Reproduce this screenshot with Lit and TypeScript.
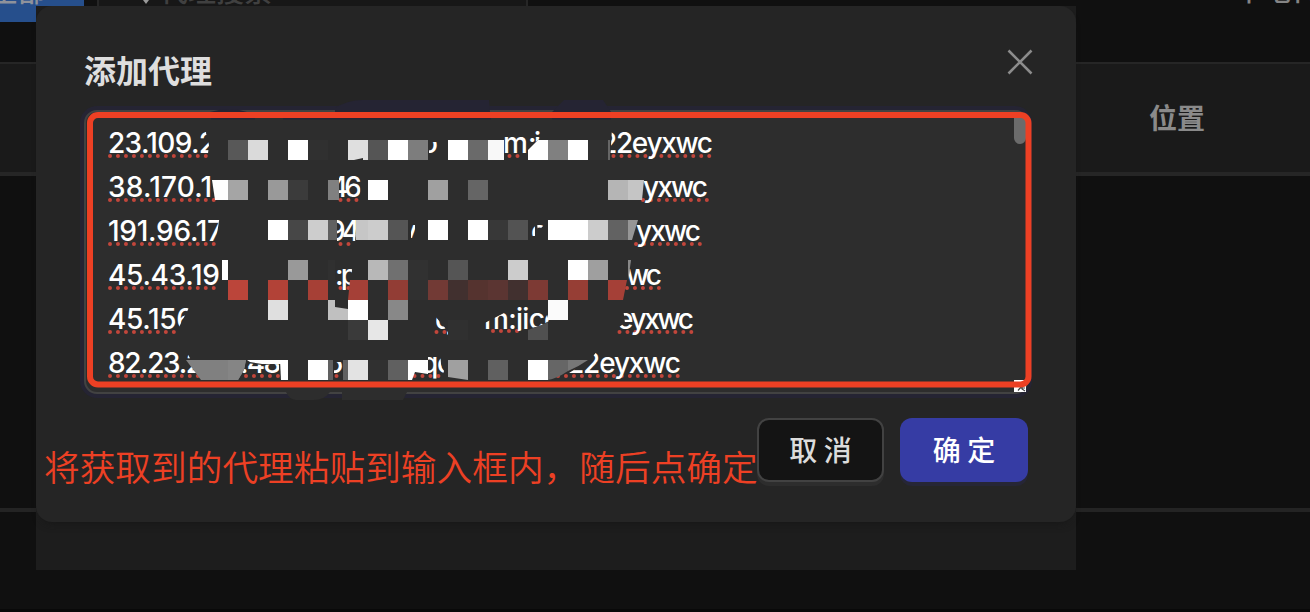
import { LitElement, html, svg, css } from "lit";
import { customElement } from "lit/decorators.js";

type Cell = [x: number, y: number, color: string, w?: number];
type Fragment = { t: string; x: number; y: number; w: number; cut?: string };

const FIELD = "#2d2d2d";

const cells: Cell[] = [
  [228, 140, "#585858"], [248, 140, "#dadada"], [288, 140, "#fff"], [308, 140, "#303030"],
  [348, 140, "#dfdfdf"], [368, 140, "#555"], [388, 140, "#fff"], [408, 140, "#7d7d7d"],
  [448, 140, "#fff"], [468, 140, "#6a6a6a"], [488, 140, "#f8f8f8", 16],
  [548, 140, "#808080"], [568, 140, "#fff"], [588, 140, "#303030"], [608, 140, "#666", 2],
  [228, 180, "#a5a5a5"], [268, 180, "#999"], [288, 180, "#3b3b3b"], [328, 180, "#808080", 11],
  [368, 180, "#fff"], [428, 180, "#a0a0a0"], [468, 180, "#656565"], [608, 180, "#b5b5b5"],
  [268, 220, "#fff"], [288, 220, "#474747"], [308, 220, "#cdcdcd"], [328, 220, "#606060", 9],
  [356, 220, "#c6c6c6", 12], [368, 220, "#cccccc"], [388, 220, "#555"], [428, 220, "#fff"],
  [468, 220, "#fff"], [488, 220, "#383838"], [508, 220, "#535353"], [548, 220, "#fff"],
  [568, 220, "#fff"], [588, 220, "#ccc"], [608, 220, "#626262"],
  [222, 260, "#fff", 6], [288, 260, "#999"], [328, 260, "#303030", 7], [368, 260, "#b8b8b8"],
  [388, 260, "#707070"], [408, 260, "#313131"], [448, 260, "#555"], [508, 260, "#ccc"],
  [568, 260, "#fff"], [588, 260, "#9f9f9f"],
  [228, 280, "#bb453a"], [268, 280, "#b24237"], [308, 280, "#a64036"],
  [388, 280, "#923d35"], [408, 280, "#303030"], [428, 280, "#723a35"], [448, 280, "#41302f"],
  [468, 280, "#55332f"], [488, 280, "#5b3532"], [508, 280, "#41302f"], [528, 280, "#7d3a34"],
  [568, 280, "#963e35"],
  [268, 300, "#dfdfdf"], [348, 300, "#fff"], [388, 300, "#888"], [548, 300, "#fbfbfb"],
  [348, 320, "#3a3a3a"], [368, 320, "#e7e7e7"], [448, 320, "#303030"],
  [308, 360, "#fff"], [328, 360, "#606060", 5], [343, 360, "#606060", 5], [348, 360, "#e3e3e3"],
  [368, 360, "#303030"], [388, 360, "#606060"], [488, 360, "#606060"], [528, 360, "#fff"],
];

const shards: [string, string][] = [
  ["M538 140H548V160H528V150Z", "#fff"],
  ["M212 180H228V200H215Z", "#fff"],
  ["M628 180H644L642 200H628Z", "#c5c5c5"],
  ["M628 220H638L632 240H628Z", "#969696"],
  ["M628 260H631L629 275L628 280Z", "#888"],
  ["M350 280H368V300H348Z", "#a54037"],
  ["M608 280H627L623 300H608Z", "#a54037"],
  ["M328 300H335V307L348 309V320H328Z", "#c0c0c0"],
  ["M528 330Q542 325 548 322V340H528Z", "#505050"],
  ["M186 360H246L244 370L238 380H201Z", "#808080"],
  ["M228 360H246L244 370L238 380H228Z", "#858585"],
  ["M280 360H288V380H281Z", "#fff"],
  ["M247 360H288V364H262L250 362Z", "#fff"],
  ["M408 360H428V374L415 372L412 380H408Z", "#fff"],
  ["M448 360H468V380L448 377Z", "#a0a0a0"],
  ["M548 360H568V371Q556 379 548 380Z", "#666"],
  ["M568 360H588Q578 367 568 371Z", "#777"],
  ["M354 160L363 158L363 160Z", FIELD],
];

const fragments: Fragment[] = [
  { t: "23.109.2", x: 108, y: 153, w: 108, cut: "M104 120H208L206 133L209 145L207 162H104Z" },
  { t: "o", x: 421, y: 153, w: 16, cut: "M429 142H440V155H429Z" },
  { t: "m", x: 503, y: 153, w: 24, cut: "M504 130H527V160H504Z" },
  { t: ":j", x: 528, y: 153, w: 13, cut: "M528 128H542V137L533 144H528Z" },
  { t: "22eyxwc", x: 600, y: 153, w: 113, cut: "M612 128H720V163H610Z" },
  { t: "38.170.1", x: 108, y: 197, w: 104 },
  { t: "46", x: 330, y: 197, w: 32, cut: "M339 170H361L360 205H339Z" },
  { t: "yxwc", x: 643, y: 197, w: 65 },
  { t: "191.96.17", x: 108, y: 241, w: 115, cut: "M104 214H220L215 248H104Z" },
  { t: "94", x: 328, y: 241, w: 32, cut: "M337 214H357L355 244H337Z" },
  { t: "y", x: 401, y: 241, w: 14, cut: "M411 220H415V238H411Z" },
  { t: "o", x: 531, y: 241, w: 16, cut: "M530 225H535V236H530ZM537 224H545L538 231Z" },
  { t: "yxwc", x: 636, y: 241, w: 65 },
  { t: "45.43.19", x: 108, y: 285, w: 112 },
  { t: ":p", x: 335, y: 285, w: 23, cut: "M335 260H353L350 290H335Z" },
  { t: "wc", x: 626, y: 285, w: 36, cut: "M630 260H664V290H628Z" },
  { t: "45.156", x: 108, y: 329, w: 86, cut: "M104 302H192L181 323L177 332H104Z" },
  { t: "q", x: 435, y: 329, w: 16, cut: "M435 316L446 329L450 336H446L436 326Z" },
  { t: "m:jico", x: 484, y: 329, w: 77, cut: "M477 327L504 313L510 302H544L548 318L551 320L540 326L519 331L477 330Z" },
  { t: "eyxwc", x: 617, y: 329, w: 77, cut: "M623 308H700V338H618L619 327L625 323Z" },
  { t: "82.23.2", x: 108, y: 373, w: 95, cut: "M104 346H184L197 373V378H104Z" },
  { t: ".48", x: 240, y: 373, w: 41, cut: "M243 370L247 363L262 365L279 364V378H242Z" },
  { t: "5", x: 326, y: 373, w: 16, cut: "M334 362H343V377H334Z" },
  { t: "qo", x: 421, y: 373, w: 33, cut: "M428 350H440L441 364L444 371L441 382H428Z" },
  { t: "22eyxwc", x: 567, y: 373, w: 114, cut: "M569 373L590 360L598 350H690V382H567Z" },
];

const squiggles: [number, number, number][] = [
  [110, 156, 207], [509.5, 156, 519], [613.5, 156, 712],
  [110, 200, 214], [340.5, 200, 358], [643, 200, 708],
  [110, 244, 216], [340.5, 244, 352], [636, 244, 701],
  [110, 288, 221], [340.5, 288, 350], [627, 288, 661],
  [110, 332, 177], [436.5, 332, 446], [493, 331, 519], [619.5, 332, 694],
  [110, 376, 199], [246, 376, 280], [336.5, 376, 343], [414.5, 376, 446], [558, 376, 680],
];

@customElement("redaction-layer")
export class RedactionLayer extends LitElement {
  static styles = css`
    :host { display: block; }
    .layer { display: block; }
    .line { font: 500 28px Inter, "Liberation Sans", sans-serif; fill: #fff; }
    .dots { stroke: #c2463b; stroke-width: 4; stroke-linecap: round; stroke-dasharray: 0 7.98; }
  `;

  render() {
    return html`<svg class="layer" width="1310" height="612" viewBox="0 0 1310 612">
      <path d="M335 108Q348 100 362 100H489L490 112H335ZM552 112L564 100H603L611 112ZM210 112Q230 106 247 112Z" fill="#252433"/>
      <path d="M286 392H330Q324 400 314 400H296Q289 399 286 392ZM342 392H407L403 400H342Z" fill="${FIELD}"/>
      ${squiggles.map(([a, y, b]) => svg`<line class="dots" x1=${a} y1=${y} x2=${b} y2=${y} />`)}
      ${fragments.map((f, i) => svg`
        <clipPath id="c${i}"><path d=${f.cut ?? "M0 0H1310V612H0Z"} /></clipPath>
        <text class="line" x=${f.x} y=${f.y - 0.5} textLength=${f.w} clip-path="url(#c${i})">${f.t}</text>`)}
      <g shape-rendering="crispEdges">
        ${cells.map(([x, y, c, w]) => svg`<rect x=${x} y=${y} width=${w ?? 20} height="20" fill=${c} />`)}
      </g>
      ${shards.map(([d, c]) => svg`<path d=${d} fill=${c} />`)}
      <path d="M211 118.5H255M283 118.5H491M552 118.5H611" stroke="#252433" stroke-width="2"/>
      <path d="M1014 118H1026V138A6 6 0 0 1 1014 138Z" fill="#6b6b6b"/>
      <path d="M1014 380H1026V392H1014Z" fill="#fff"/>
      <path d="M1018 390.5L1021 387M1022 386V389L1025 391M1021 388H1025" stroke="#444" stroke-width="1.2" fill="none"/>
      <rect x="90" y="115" width="938.5" height="269.5" rx="8" fill="none" stroke="#ed4024" stroke-width="6"/>
      <path d="M143 0H149L146 4Z" fill="#9a9a9a"/>
    </svg>`;
  }
}

@customElement("app-root")
export class AppRoot extends LitElement {
  static styles = css`
    * { box-sizing: border-box; }
    :host {
      display: block; position: relative; width: 1310px; height: 612px; overflow: hidden;
      background: #101010; color: #dedede;
      font-family: "Noto Sans CJK SC", sans-serif;
    }
    .page { display: flex; flex-direction: column; height: 612px; }
    .toolbar { display: flex; height: 62px; align-items: flex-start; }
    .tab { width: 84px; height: 22px; background: #264f8c; color: #8e929b; overflow: hidden; }
    .search { width: 431px; height: 26px; margin-left: 13px; border: 2px solid #262626; border-top: 0; background: #171717; color: #404040; padding-left: 61px; overflow: hidden; }
    .peek { display: block; font-size: 28px; line-height: 28px; font-weight: 500; margin-top: -24px; white-space: nowrap; }
    .local { width: 75px; height: 10px; margin-left: auto; overflow: hidden; color: #858585; }
    .local .peek { margin-top: -25px; }
    .tab .peek { margin-left: -10px; }
    .head { display: flex; align-items: center; height: 114px; border-top: 2px solid #262626; border-bottom: 4px solid #262626; background: #1a1a1a; padding: 0 0 2px 1149px; font-size: 28px; font-weight: 700; color: #8a8a8a; }
    .row { height: 336px; border-bottom: 4px solid #242424; }
    .end { margin-top: auto; height: 3px; background: #090909; }
    .modal { position: absolute; left: 36px; top: 6px; width: 1040px; height: 564px; background: #1d1d1d; }
    .dialog { display: flex; flex-direction: column; height: 516px; padding: 0 48px; border-radius: 16px; background: #252525; box-shadow: 0 6px 10px -6px #151515; }
    .titlebar { display: flex; justify-content: space-between; height: 104px; flex: none; }
    .title { margin: 40px 0 0; font-size: 32px; line-height: 46px; font-weight: 700; color: #dedede; }
    .close { margin: 43px -5px 0 0; width: 26px; height: 26px; }
    .field { height: 284px; flex: none; border: 2px solid #424242; border-radius: 13px; background: #2d2d2d; box-shadow: 0 0 0 4px #252433; }
    .actions { display: flex; justify-content: flex-end; gap: 16px; margin-top: 24px; }
    button { height: 64px; border: 0; border-radius: 12px; padding: 0 0 2px; font: 500 28px "Noto Sans CJK SC", sans-serif; color: #dcdcdc; }
    .cancel { width: 127px; border: 2px solid #424242; background: #141414; box-shadow: 0 4px 0 #2d2d2d; padding: 0 0 2px; }
    .ok { width: 128px; background: #363ca4; color: #fff; box-shadow: 0 4px 0 #262636; }
    .mosaic { position: absolute; left: 0; top: 0; }
    .note { position: absolute; left: 44px; top: 440px; font-size: 35.7px; line-height: 52px; font-weight: 350; color: #ed4024; white-space: nowrap; }
  `;

  render() {
    return html`
      <div class="page">
        <div class="toolbar">
          <div class="tab"><span class="peek">全部</span></div>
          <div class="search"><span class="peek">代理搜索</span></div>
          <div class="local"><span class="peek">本地代理</span></div>
        </div>
        <div class="head">位置</div>
        <div class="row"></div>
        <div class="end"></div>
      </div>
      <div class="modal">
        <div class="dialog">
          <div class="titlebar">
            <h2 class="title">添加代理</h2>
            <svg class="close" viewBox="0 0 26 26"><path d="M1.5 1.5L24.5 24.5M24.5 1.5L1.5 24.5" stroke="#8c8c8c" stroke-width="2.6"/></svg>
          </div>
          <div class="field"></div>
          <div class="actions">
            <button class="cancel">取 消</button>
            <button class="ok">确 定</button>
          </div>
        </div>
      </div>
      <redaction-layer class="mosaic"></redaction-layer>
      <div class="note">将获取到的代理粘贴到输入框内，随后点确定</div>
    `;
  }
}
